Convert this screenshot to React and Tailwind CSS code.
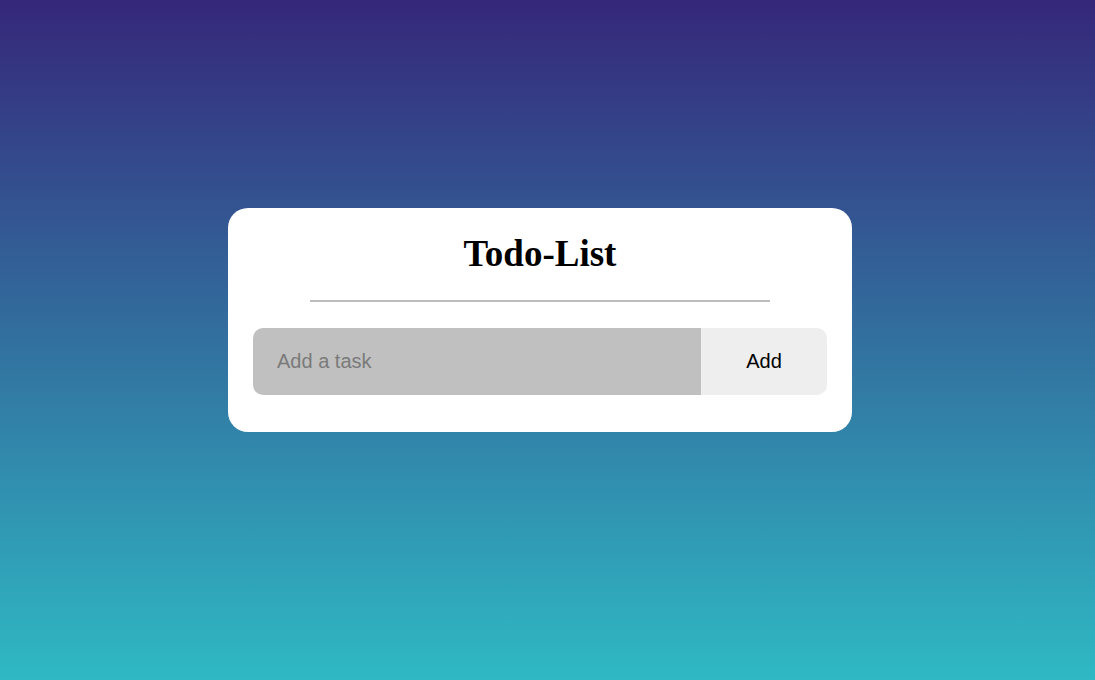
export default function App() {
  return (
    <div className="min-h-[680px] w-full bg-[linear-gradient(to_bottom,#35277a,#2fb9c4)] flex justify-center pr-[15px] pt-[208px]">
      <div className="w-[624px] h-[224px] bg-white rounded-[20px] px-[25px] pt-[26px] flex flex-col items-center">
        <h1 className="text-[37px] leading-[40px] font-bold text-black font-['Liberation_Serif',serif]">Todo-List</h1>
        <div className="w-[80%] h-[2px] bg-[#bdbdbd] mt-[26px]"></div>
        <div className="w-full h-[67px] mt-[26px] flex rounded-[10px] overflow-hidden font-['Liberation_Sans',Arial,sans-serif]">
          <input
            type="text"
            placeholder="Add a task"
            className="flex-1 min-w-0 h-full bg-[#c0c0c0] pl-[24px] pb-[1px] text-[20px] text-black placeholder:text-[#7a7a7a] outline-none border-0"
          />
          <button className="w-[126px] h-full bg-[#eeeeee] pb-[2px] text-[20px] text-black">Add</button>
        </div>
      </div>
    </div>
  );
}
